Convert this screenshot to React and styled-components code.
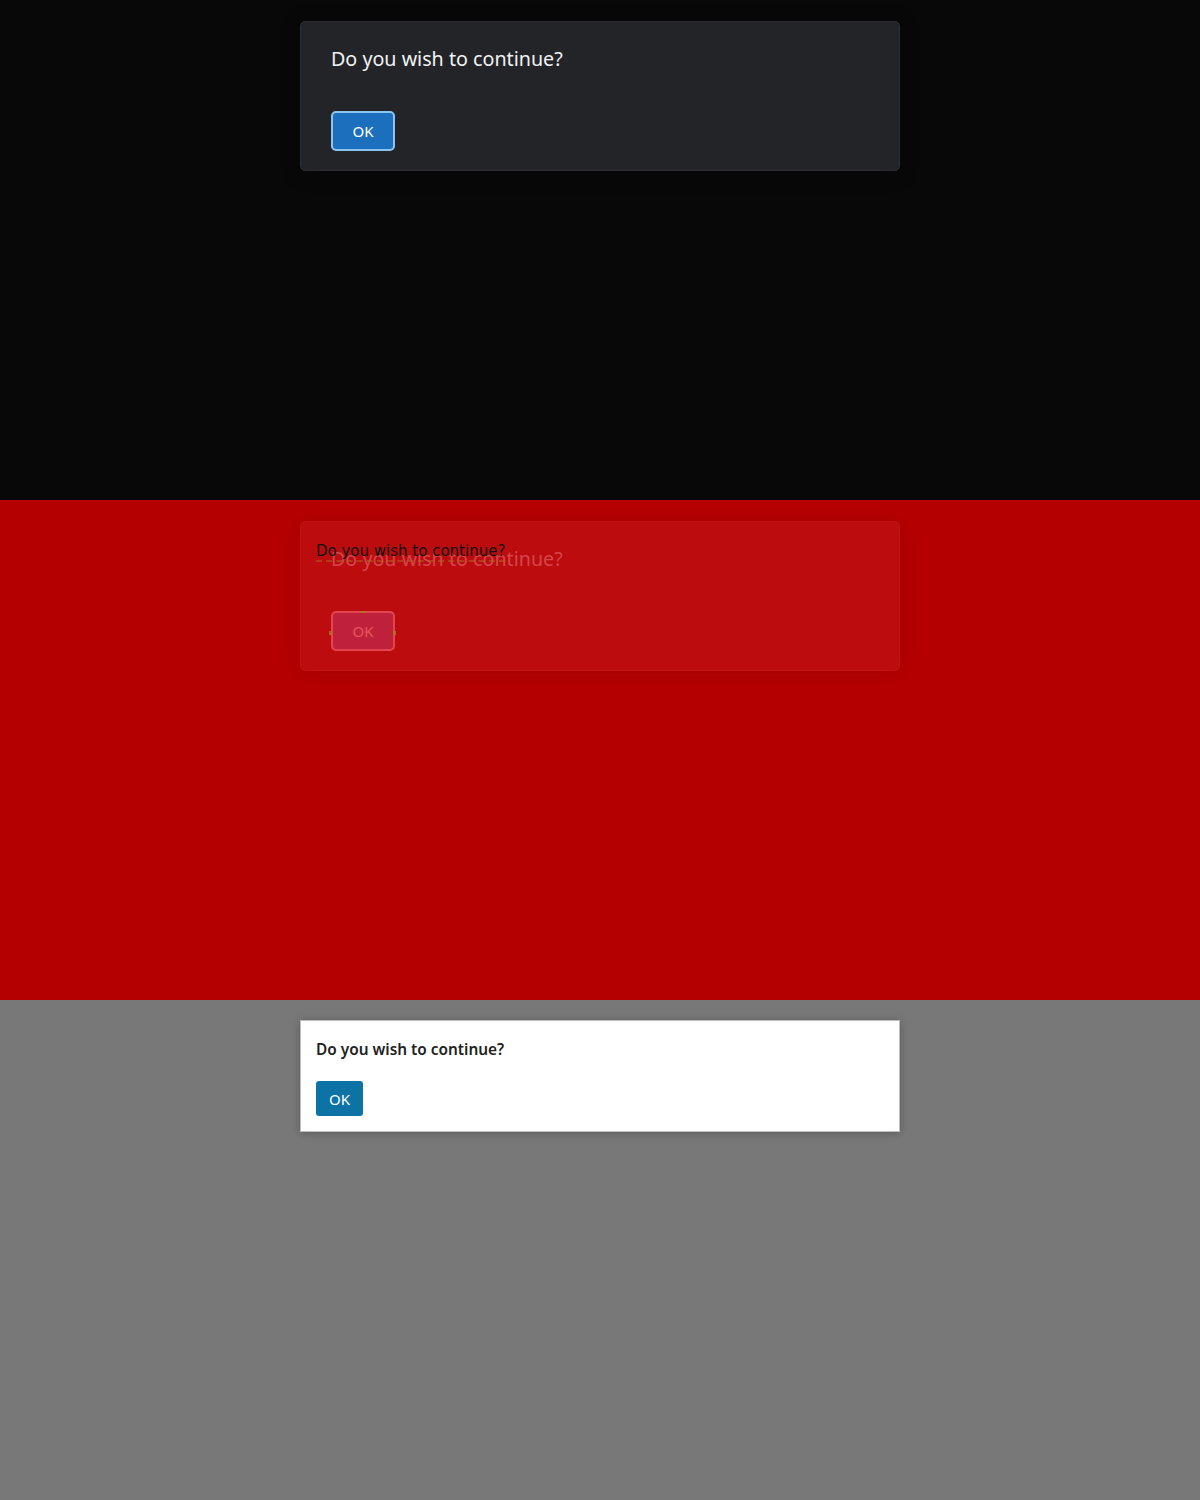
import React from "react";
import styled, { createGlobalStyle } from "styled-components";

const Global = createGlobalStyle`
  html, body { margin: 0; padding: 0; }
  body { font-family: "Noto Sans", "Open Sans", sans-serif; }
`;

const Band = styled.section`
  height: 500px;
  box-sizing: border-box;
  padding-top: ${(p) => p.$top}px;
  display: flex;
  flex-direction: column;
  align-items: center;
  background: ${(p) => p.$bg};
`;

const DarkDialog = styled.div`
  width: 600px;
  box-sizing: border-box;
  padding: 25px 30px 19px;
  border-radius: 5px;
  border: 1px solid ${(p) => p.$border};
  background: ${(p) => p.$bg};
  box-shadow: 0 2px 20px ${(p) => p.$shadow};
  position: relative;
  display: flex;
  flex-direction: column;
  align-items: flex-start;
  gap: 40px;
`;

const DarkTitle = styled.h2`
  margin: 0;
  font-family: "Noto Sans", sans-serif;
  font-weight: 400;
  font-size: 19.7px;
  line-height: 24px;
  color: ${(p) => p.$color};
`;

const DarkButton = styled.button`
  width: 64px;
  height: 40px;
  box-sizing: border-box;
  border-radius: 5px;
  border: 2px solid ${(p) => p.$border};
  background: ${(p) => p.$bg};
  color: ${(p) => p.$color};
  font-family: "Noto Sans", sans-serif;
  font-size: 15px;
  padding: 0;
  display: flex;
  align-items: center;
  justify-content: center;
`;

const Ghost = styled.div`
  position: absolute;
  left: 15px;
  top: 20px;
  font-family: "DejaVu Sans", sans-serif;
  font-size: 15px;
  line-height: 18px;
  color: #111;
  border-bottom: 2px dashed rgba(170, 110, 30, 0.5);
`;

const Mark = styled.span`
  position: absolute;
  width: ${(p) => p.$w}px;
  height: ${(p) => p.$h}px;
  background: rgba(170, 120, 30, 0.8);
`;

const LightDialog = styled.div`
  width: 600px;
  box-sizing: border-box;
  padding: 15px;
  background: #fff;
  border: 1px solid #bdbdbd;
  box-shadow: 0 1px 8px rgba(0, 0, 0, 0.25);
  display: flex;
  flex-direction: column;
  align-items: flex-start;
  gap: 17px;
`;

const LightTitle = styled.h2`
  margin: 0;
  font-family: "Noto Sans", sans-serif;
  font-weight: 600;
  font-size: 15.4px;
  line-height: 28px;
  color: #222;
`;

const LightButton = styled.button`
  width: 47px;
  height: 35px;
  border: none;
  border-radius: 3px;
  background: #0c73a4;
  color: #fff;
  font-family: "Noto Sans", sans-serif;
  font-size: 15px;
  padding: 0;
`;

export default function App() {
  return (
    <>
      <Global />
      <Band $bg="#080808" $top={21}>
        <DarkDialog $bg="#232428" $border="#2c2d31" $shadow="rgba(0,0,0,0.3)">
          <DarkTitle $color="#f2f2f2">Do you wish to continue?</DarkTitle>
          <DarkButton $bg="#1b6fbd" $border="#8cc4ef" $color="#fff">OK</DarkButton>
        </DarkDialog>
      </Band>
      <Band $bg="#b40000" $top={21}>
        <DarkDialog $bg="#bd0c0e" $border="#c01416" $shadow="rgba(0,0,0,0.08)">
          <Ghost>Do you wish to continue?</Ghost>
          <DarkTitle $color="#d2454b">Do you wish to continue?</DarkTitle>
          <DarkButton $bg="#c0213a" $border="#e2454f" $color="#e65560">OK</DarkButton>
          <Mark style={{ left: 59, top: 89 }} $w={6} $h={2} />
          <Mark style={{ left: 28, top: 109 }} $w={3} $h={4} />
          <Mark style={{ left: 92, top: 109 }} $w={3} $h={4} />
        </DarkDialog>
      </Band>
      <Band $bg="#787878" $top={20}>
        <LightDialog>
          <LightTitle>Do you wish to continue?</LightTitle>
          <LightButton>OK</LightButton>
        </LightDialog>
      </Band>
    </>
  );
}
